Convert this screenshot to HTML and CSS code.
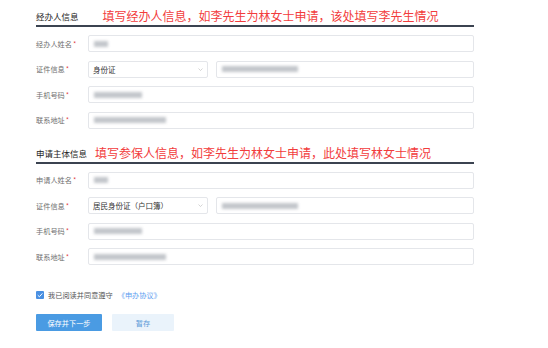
FILE: index.html
```html
<!DOCTYPE html>
<html lang="zh-CN">
<head>
    <meta charset="UTF-8">
    <meta name="viewport" content="width=device-width, initial-scale=1.0">
    <title>申办信息</title>
    <link rel="stylesheet" href="styles.css">
</head>
<body>
    <div class="form">
        <div class="section-head">
            <span class="section-title">经办人信息</span>
            <span class="note note-first">填写经办人信息，如李先生为林女士申请，该处填写李先生情况</span>
        </div>
        <div class="rows">
            <div class="row">
                <label class="label">经办人姓名<i>*</i></label>
                <div class="input"><span class="blur blur-name"></span></div>
            </div>
            <div class="row">
                <label class="label">证件信息<i>*</i></label>
                <div class="select">
                    <span>身份证</span>
                    <svg viewBox="0 0 10 6"><path d="M1 1l4 4 4-4"/></svg>
                </div>
                <div class="input input-grow"><span class="blur blur-id"></span></div>
            </div>
            <div class="row">
                <label class="label">手机号码<i>*</i></label>
                <div class="input"><span class="blur blur-phone"></span></div>
            </div>
            <div class="row">
                <label class="label">联系地址<i>*</i></label>
                <div class="input"><span class="blur blur-addr"></span></div>
            </div>
        </div>

        <div class="section-head section-second">
            <span class="section-title">申请主体信息</span>
            <span class="note note-second">填写参保人信息，如李先生为林女士申请，此处填写林女士情况</span>
        </div>
        <div class="rows">
            <div class="row">
                <label class="label">申请人姓名<i>*</i></label>
                <div class="input"><span class="blur blur-name"></span></div>
            </div>
            <div class="row">
                <label class="label">证件信息<i>*</i></label>
                <div class="select">
                    <span>居民身份证（户口簿）</span>
                    <svg viewBox="0 0 10 6"><path d="M1 1l4 4 4-4"/></svg>
                </div>
                <div class="input input-grow"><span class="blur blur-id"></span></div>
            </div>
            <div class="row">
                <label class="label">手机号码<i>*</i></label>
                <div class="input"><span class="blur blur-phone"></span></div>
            </div>
            <div class="row">
                <label class="label">联系地址<i>*</i></label>
                <div class="input"><span class="blur blur-addr"></span></div>
            </div>
        </div>

        <div class="agree">
            <span class="checkbox">
                <svg viewBox="0 0 10 10"><path d="M2.2 5.2l2 2 3.8-4.2"/></svg>
            </span>
            <span>我已阅读并同意遵守</span>
            <a href="#" class="link">《申办协议》</a>
        </div>

        <div class="buttons">
            <button class="btn btn-primary">保存并下一步</button>
            <button class="btn btn-light">暂存</button>
        </div>
    </div>
</body>
</html>
```

FILE: styles.css
```css
body {
    margin: 0;
    background-color: #ffffff;
    font-family: "Noto Sans CJK SC", "Noto Sans", sans-serif;
    color: #333;
}

.form {
    width: 438px;
    padding-left: 36px;
}

.section-head {
    display: flex;
    align-items: center;
    padding-top: 9px;
    padding-bottom: 2px;
    border-bottom: 2px solid #3b4350;
    height: 14px;
}

.section-second {
    margin-top: 8px;
}

.section-title {
    font-size: 8.5px;
    color: #222;
}

.note {
    font-size: 12px;
    line-height: 14px;
    color: #f23c3c;
    white-space: nowrap;
}

.note-first {
    margin-left: 24px;
}

.note-second {
    margin-left: 8px;
}

.rows {
    display: flex;
    flex-direction: column;
    gap: 8.5px;
    margin-top: 8px;
}

.row {
    display: flex;
    align-items: center;
    gap: 8px;
    height: 17px;
}

.label {
    width: 44px;
    font-size: 7.2px;
    color: #6f6f6f;
    white-space: nowrap;
}

.label i {
    font-style: normal;
    color: #e0403f;
    margin-left: 1px;
}

.input, .select {
    height: 17px;
    box-sizing: border-box;
    border: 1px solid #e4e6ea;
    border-radius: 2px;
    background: #fff;
    display: flex;
    align-items: center;
    padding: 0 4px;
}

.input {
    flex: 1;
}

.select {
    width: 120px;
    flex: none;
    justify-content: space-between;
    font-size: 7.5px;
    color: #333;
}

.select svg {
    width: 5px;
    height: 3px;
    fill: none;
    stroke: #aaa;
    stroke-width: 1;
}

.blur {
    display: block;
    height: 6px;
    background: #c3c6cb;
    filter: blur(1.8px);
    margin-left: 1px;
}

.blur-name {
    width: 14px;
}

.blur-id {
    width: 76px;
}

.blur-phone {
    width: 48px;
}

.blur-addr {
    width: 72px;
}

.agree {
    display: flex;
    align-items: center;
    margin-top: 25px;
    font-size: 7.2px;
    color: #555;
}

.checkbox {
    width: 8px;
    height: 8px;
    border-radius: 1px;
    background: #4a90e2;
    margin-right: 4px;
    display: flex;
}

.checkbox svg {
    width: 8px;
    height: 8px;
    fill: none;
    stroke: #fff;
    stroke-width: 1.2;
}

.link {
    color: #5b9cf0;
    text-decoration: none;
    margin-left: 5px;
}

.buttons {
    display: flex;
    gap: 10px;
    margin-top: 14px;
}

.btn {
    height: 17px;
    border: none;
    border-radius: 1px;
    font-family: inherit;
    font-size: 7.2px;
    padding: 0;
    cursor: pointer;
}

.btn-primary {
    width: 66px;
    background-color: #4a9be3;
    color: #fff;
}

.btn-light {
    width: 62px;
    background-color: #eaf3fb;
    color: #5b9ad8;
}
```
